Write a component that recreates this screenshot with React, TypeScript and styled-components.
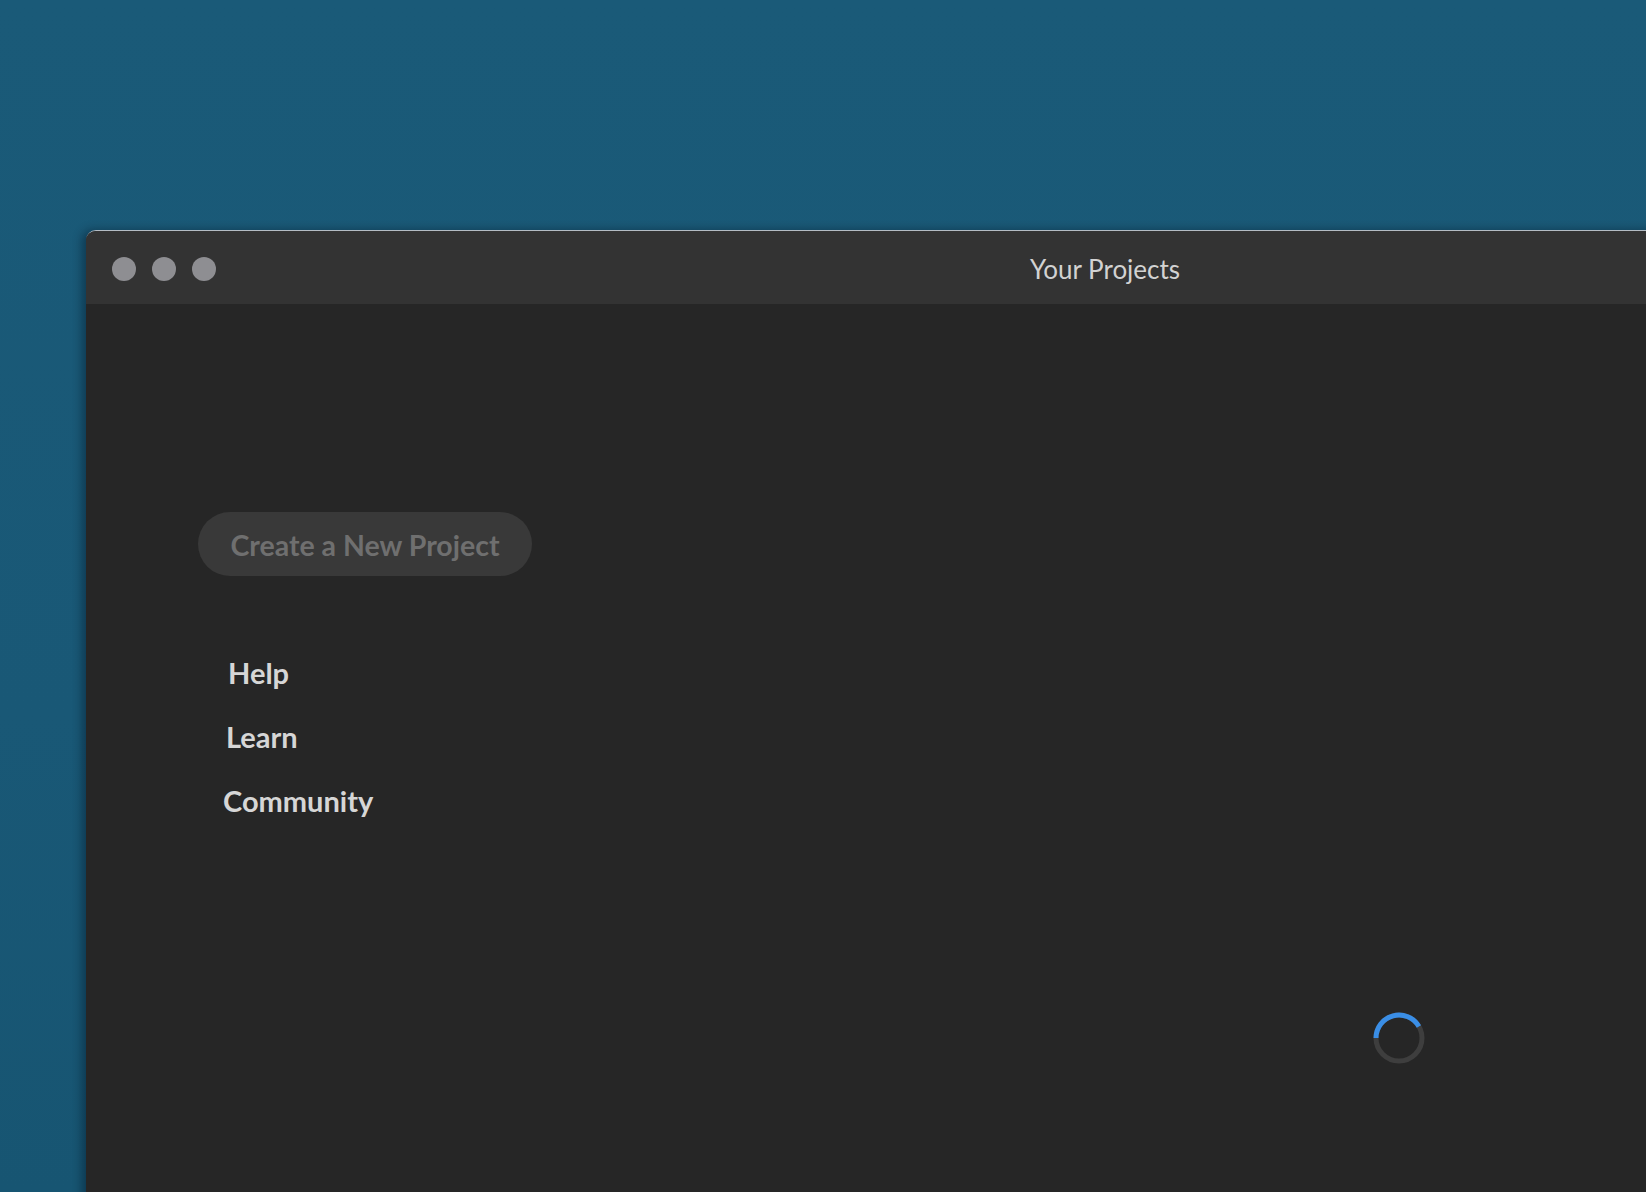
import React from "react";
import styled, { createGlobalStyle } from "styled-components";

const Global = createGlobalStyle`
  html, body {
    margin: 0;
    padding: 0;
    width: 100%;
    height: 100%;
    overflow: hidden;
    background: #1a5a78;
  }
  #root { height: 100%; }
`;

const Desktop = styled.div`
  position: relative;
  width: 100%;
  height: 1192px;
  overflow: hidden;
  background: linear-gradient(180deg, #1a5a78 0%, #195876 60%, #175572 100%);
  padding: 230px 0 0 86px;
  box-sizing: border-box;
`;

const Window = styled.div`
  width: 2036px;
  height: 1100px;
  border-radius: 10px 10px 0 0;
  overflow: hidden;
  background: #262626;
  border-top: 1.5px solid #b4bcc4;
  box-shadow: -4px 0 10px rgba(0, 20, 35, 0.45);
  display: flex;
  flex-direction: column;
  font-family: "Lato", "Open Sans", sans-serif;
`;

const TitleBar = styled.div`
  position: relative;
  height: 73px;
  flex: none;
  background: #333333;
  display: flex;
  align-items: center;
  justify-content: center;
`;

const Lights = styled.div`
  position: absolute;
  left: 26px;
  top: 26px;
  display: flex;
  gap: 16px;
`;

const Light = styled.span`
  width: 24px;
  height: 24px;
  border-radius: 50%;
  background: #8e8e92;
`;

const Title = styled.div`
  color: #d2d2d2;
  font-size: 26px;
  font-weight: 400;
  margin-left: 2px;
  margin-top: 2px;
`;

const Content = styled.div`
  flex: 1;
  display: flex;
`;

const Sidebar = styled.div`
  width: 480px;
  flex: none;
  padding: 208px 0 0 112px;
  box-sizing: border-box;
  display: flex;
  flex-direction: column;
  align-items: flex-start;
`;

const CreateButton = styled.button`
  width: 334px;
  height: 64px;
  border-radius: 32px;
  border: none;
  background: #393939;
  color: #6f6f6f;
  font-family: inherit;
  font-size: 28.5px;
  font-weight: 700;
  padding: 2px 0 0;
  cursor: default;
  margin-bottom: 65px;
`;

const LinkList = styled.nav`
  display: flex;
  flex-direction: column;
`;

const NavLink = styled.a<{ $indent: number }>`
  display: block;
  color: #d6d6d6;
  font-size: 29px;
  font-weight: 700;
  line-height: 64px;
  text-decoration: none;
  padding-left: ${(p) => p.$indent}px;
`;

const Main = styled.div`
  flex: 1;
  padding: 708px 0 0 807px;
  box-sizing: border-box;
`;

const Spinner = styled.svg`
  display: block;
  width: 52px;
  height: 52px;
`;

export default function App() {
  return (
    <>
      <Global />
      <Desktop>
        <Window>
          <TitleBar>
            <Lights>
              <Light />
              <Light />
              <Light />
            </Lights>
            <Title>Your Projects</Title>
          </TitleBar>
          <Content>
            <Sidebar>
              <CreateButton>Create a New Project</CreateButton>
              <LinkList>
                <NavLink $indent={30}>Help</NavLink>
                <NavLink $indent={28}>Learn</NavLink>
                <NavLink $indent={25}>Community</NavLink>
              </LinkList>
            </Sidebar>
            <Main>
              <Spinner viewBox="0 0 52 52">
                <circle cx="26" cy="26" r="23" fill="none" stroke="#3e3e3e" strokeWidth="5" />
                <path
                  d="M 3 26 A 23 23 0 0 1 45.9 14.5"
                  fill="none"
                  stroke="#3a8ee6"
                  strokeWidth="5"
                />
              </Spinner>
            </Main>
          </Content>
        </Window>
      </Desktop>
    </>
  );
}
